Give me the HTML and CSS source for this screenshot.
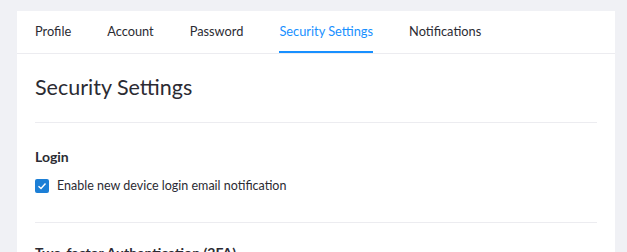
FILE: index.html
```html
<!DOCTYPE html>
<html>
<head>
<meta charset="utf-8">
<link rel="stylesheet" href="styles.css">
</head>
<body>
<div class="card">
  <nav class="tabs">
    <a class="tab">Profile</a>
    <a class="tab">Account</a>
    <a class="tab">Password</a>
    <a class="tab active">Security Settings</a>
    <a class="tab">Notifications</a>
  </nav>
  <div class="content">
    <h1 class="title">Security Settings</h1>
    <section class="section">
      <h2 class="section-title">Login</h2>
      <label class="check">
        <span class="box"><svg viewBox="0 0 14 14" width="14" height="14"><path d="M3.5 7.2 L6 9.5 L10.5 4.5" fill="none" stroke="#fff" stroke-width="1.4"/></svg></span>
        <span>Enable new device login email notification</span>
      </label>
    </section>
    <section class="section section-2fa">
      <h2 class="section-title">Two-factor Authentication (2FA)</h2>
    </section>
  </div>
</div>
</body>
</html>
```
FILE: styles.css
```css
html, body { margin: 0; padding: 0; }
body {
  background: #f0f1f5;
  font-family: Lato, "Open Sans", sans-serif;
  color: #2b2b33;
  padding: 11px 12px 0 17px;
  height: 252px;
  box-sizing: border-box;
  overflow: hidden;
}
.card {
  background: #fff;
  width: 598px;
  min-height: 260px;
}
.tabs {
  display: flex;
  gap: 36px;
  padding: 0 18px;
  height: 42px;
  border-bottom: 1px solid #ececf0;
}
.tab {
  font-size: 12.8px;
  padding-top: 1px;
  line-height: 39px;
  color: #2b2b33;
  border-bottom: 2px solid transparent;
}
.tab.active {
  color: #1890ff;
  border-bottom-color: #1890ff;
}
.content {
  padding: 0 18px;
}
.title {
  font-size: 21.5px;
  font-weight: 400;
  margin: 0;
  padding: 22px 0 23px;
  line-height: 23px;
  border-bottom: 1px solid #ececf0;
}
.section {
  padding: 26px 0 28px;
  border-bottom: 1px solid #ececf0;
}
.section-2fa {
  padding-top: 22px;
}
.section-title {
  font-size: 14px;
  font-weight: 700;
  margin: 0 0 13px;
  line-height: 16px;
}
.check {
  display: flex;
  align-items: center;
  gap: 8px;
  font-size: 12.5px;
  line-height: 16px;
}
.box {
  width: 14px;
  height: 14px;
  background: #1c7fd6;
  border-radius: 2px;
  display: flex;
}
```
